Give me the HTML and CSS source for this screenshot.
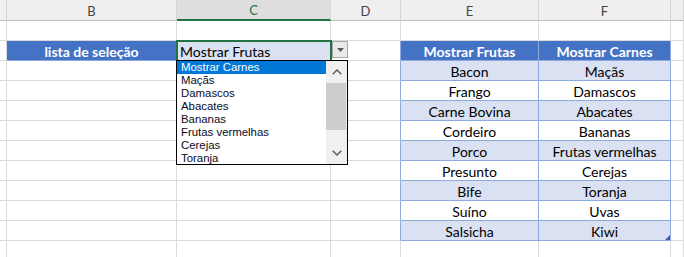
FILE: index.html
```html
<!DOCTYPE html>
<html lang="pt">
<head>
    <meta charset="UTF-8">
    <title>Lista de seleção</title>
    <link rel="stylesheet" href="styles.css">
</head>
<body>
    <div class="sheet">
        <div class="row head">
            <div class="cell"></div>
            <div class="cell">B</div>
            <div class="cell active">C</div>
            <div class="cell">D</div>
            <div class="cell">E</div>
            <div class="cell">F</div>
            <div class="cell"></div>
        </div>
        <div class="row">
            <div class="cell"></div><div class="cell"></div><div class="cell"></div><div class="cell"></div><div class="cell"></div><div class="cell"></div><div class="cell"></div>
        </div>
        <div class="row">
            <div class="cell"></div>
            <div class="cell label">lista de seleção</div>
            <div class="cell picked">Mostrar Frutas</div>
            <div class="cell t-left"></div>
            <div class="cell t-head">Mostrar Frutas</div>
            <div class="cell t-head">Mostrar Carnes</div>
            <div class="cell"></div>
        </div>
        <div class="row">
            <div class="cell"></div><div class="cell"></div><div class="cell"></div><div class="cell t-left"></div>
            <div class="cell t-odd">Bacon</div><div class="cell t-odd">Maçãs</div><div class="cell"></div>
        </div>
        <div class="row">
            <div class="cell"></div><div class="cell"></div><div class="cell"></div><div class="cell t-left"></div>
            <div class="cell t-even">Frango</div><div class="cell t-even">Damascos</div><div class="cell"></div>
        </div>
        <div class="row">
            <div class="cell"></div><div class="cell"></div><div class="cell"></div><div class="cell t-left"></div>
            <div class="cell t-odd">Carne Bovina</div><div class="cell t-odd">Abacates</div><div class="cell"></div>
        </div>
        <div class="row">
            <div class="cell"></div><div class="cell"></div><div class="cell"></div><div class="cell t-left"></div>
            <div class="cell t-even">Cordeiro</div><div class="cell t-even">Bananas</div><div class="cell"></div>
        </div>
        <div class="row">
            <div class="cell"></div><div class="cell"></div><div class="cell"></div><div class="cell t-left"></div>
            <div class="cell t-odd">Porco</div><div class="cell t-odd">Frutas vermelhas</div><div class="cell"></div>
        </div>
        <div class="row">
            <div class="cell"></div><div class="cell"></div><div class="cell"></div><div class="cell t-left"></div>
            <div class="cell t-even">Presunto</div><div class="cell t-even">Cerejas</div><div class="cell"></div>
        </div>
        <div class="row">
            <div class="cell"></div><div class="cell"></div><div class="cell"></div><div class="cell t-left"></div>
            <div class="cell t-odd">Bife</div><div class="cell t-odd">Toranja</div><div class="cell"></div>
        </div>
        <div class="row">
            <div class="cell"></div><div class="cell"></div><div class="cell"></div><div class="cell t-left"></div>
            <div class="cell t-even">Suíno</div><div class="cell t-even">Uvas</div><div class="cell"></div>
        </div>
        <div class="row">
            <div class="cell"></div><div class="cell"></div><div class="cell"></div><div class="cell t-left"></div>
            <div class="cell t-odd">Salsicha</div><div class="cell t-odd t-end">Kiwi</div><div class="cell"></div>
        </div>
        <div class="row">
            <div class="cell"></div><div class="cell"></div><div class="cell"></div><div class="cell"></div><div class="cell"></div><div class="cell"></div><div class="cell"></div>
        </div>

        <div class="drop-btn">
            <svg width="7" height="4" viewBox="0 0 7 4"><polygon points="0,0 7,0 3.5,4" fill="#5a5a5a"/></svg>
        </div>

        <div class="drop-list">
            <ul class="items">
                <li class="hover">Mostrar Carnes</li>
                <li>Maçãs</li>
                <li>Damascos</li>
                <li>Abacates</li>
                <li>Bananas</li>
                <li>Frutas vermelhas</li>
                <li>Cerejas</li>
                <li>Toranja</li>
            </ul>
            <div class="scrollbar">
                <div class="arrow">
                    <svg width="10" height="6" viewBox="0 0 10 6"><polyline points="0.7,5.3 5,1 9.3,5.3" fill="none" stroke="#606060" stroke-width="1.5"/></svg>
                </div>
                <div class="thumb"></div>
                <div class="track"></div>
                <div class="arrow">
                    <svg width="10" height="6" viewBox="0 0 10 6"><polyline points="0.7,0.7 5,5 9.3,0.7" fill="none" stroke="#606060" stroke-width="1.5"/></svg>
                </div>
            </div>
        </div>
    </div>
</body>
</html>
```

FILE: styles.css
```css
body {
    margin: 0;
    background: white;
    overflow: hidden;
    font-family: Lato, "Open Sans", sans-serif;
    font-size: 14px;
    color: #000;
}
.sheet {
    position: relative;
    width: 684px;
    height: 257px;
    overflow: hidden;
}
.row {
    display: grid;
    grid-template-columns: 7px 170px 154px 70px 138px 132px 1fr;
    height: 20px;
}
.cell {
    box-sizing: border-box;
    border-right: 1px solid #dadada;
    border-bottom: 1px solid #dadada;
    display: flex;
    align-items: center;
    justify-content: center;
    white-space: nowrap;
    overflow: hidden;
    padding-top: 1px;
}
.head {
    height: 21px;
}
.head .cell {
    background: #efefef;
    border-right-color: #d4d4d4;
    border-bottom-color: #bdbdbd;
    color: #444;
    font-size: 13px;
}
.head .active {
    background: #dedede;
    color: #217346;
    border-bottom: 2px solid #217346;
}
.label {
    background: #4472c4;
    color: white;
    font-weight: bold;
    border-bottom-color: #8ea9db;
    border-right-color: #4472c4;
}
.picked {
    position: relative;
    z-index: 1;
    background: #d9e1f2;
    justify-content: flex-start;
    padding-left: 3px;
    outline: 2px solid #217346;
    outline-offset: -1px;
}
.t-left {
    border-right-color: #8ea9db;
}
.t-head {
    background: #4472c4;
    color: white;
    font-weight: bold;
    border-right-color: #8ea9db;
    border-bottom-color: #8ea9db;
}
.t-odd {
    background: #d9e1f2;
    border-right-color: #8ea9db;
    border-bottom-color: #8ea9db;
}
.t-even {
    background: white;
    border-right-color: #8ea9db;
    border-bottom-color: #8ea9db;
}
.t-end {
    position: relative;
}
.t-end::after {
    content: "";
    position: absolute;
    right: 0;
    bottom: 0;
    border-left: 5px solid transparent;
    border-bottom: 5px solid #3f5aa8;
}
.drop-btn {
    position: absolute;
    left: 332px;
    top: 41px;
    width: 16px;
    height: 17px;
    box-sizing: border-box;
    background: #e9e9e9;
    border: 1px solid #a6a6a6;
    display: flex;
    align-items: center;
    justify-content: center;
    z-index: 2;
}
.drop-list {
    position: absolute;
    left: 176px;
    top: 60px;
    width: 172px;
    height: 105px;
    box-sizing: border-box;
    border: 1px solid #000;
    background: white;
    display: flex;
    z-index: 3;
    font-family: "Liberation Sans", Arial, sans-serif;
    font-size: 11.4px;
}
.items {
    list-style: none;
    margin: 0;
    padding: 0;
    flex: 1;
    overflow: hidden;
}
.items li {
    height: 13px;
    line-height: 13px;
    padding-left: 4px;
    color: #0a0a1e;
}
.items .hover {
    background: #0078d7;
    color: white;
}
.scrollbar {
    width: 21px;
    background: #f0f0f0;
    display: flex;
    flex-direction: column;
}
.arrow {
    height: 22px;
    display: flex;
    align-items: center;
    justify-content: center;
}
.thumb {
    height: 47px;
    background: #cdcdcd;
    margin-right: 1px;
}
.track {
    flex: 1;
}
```
